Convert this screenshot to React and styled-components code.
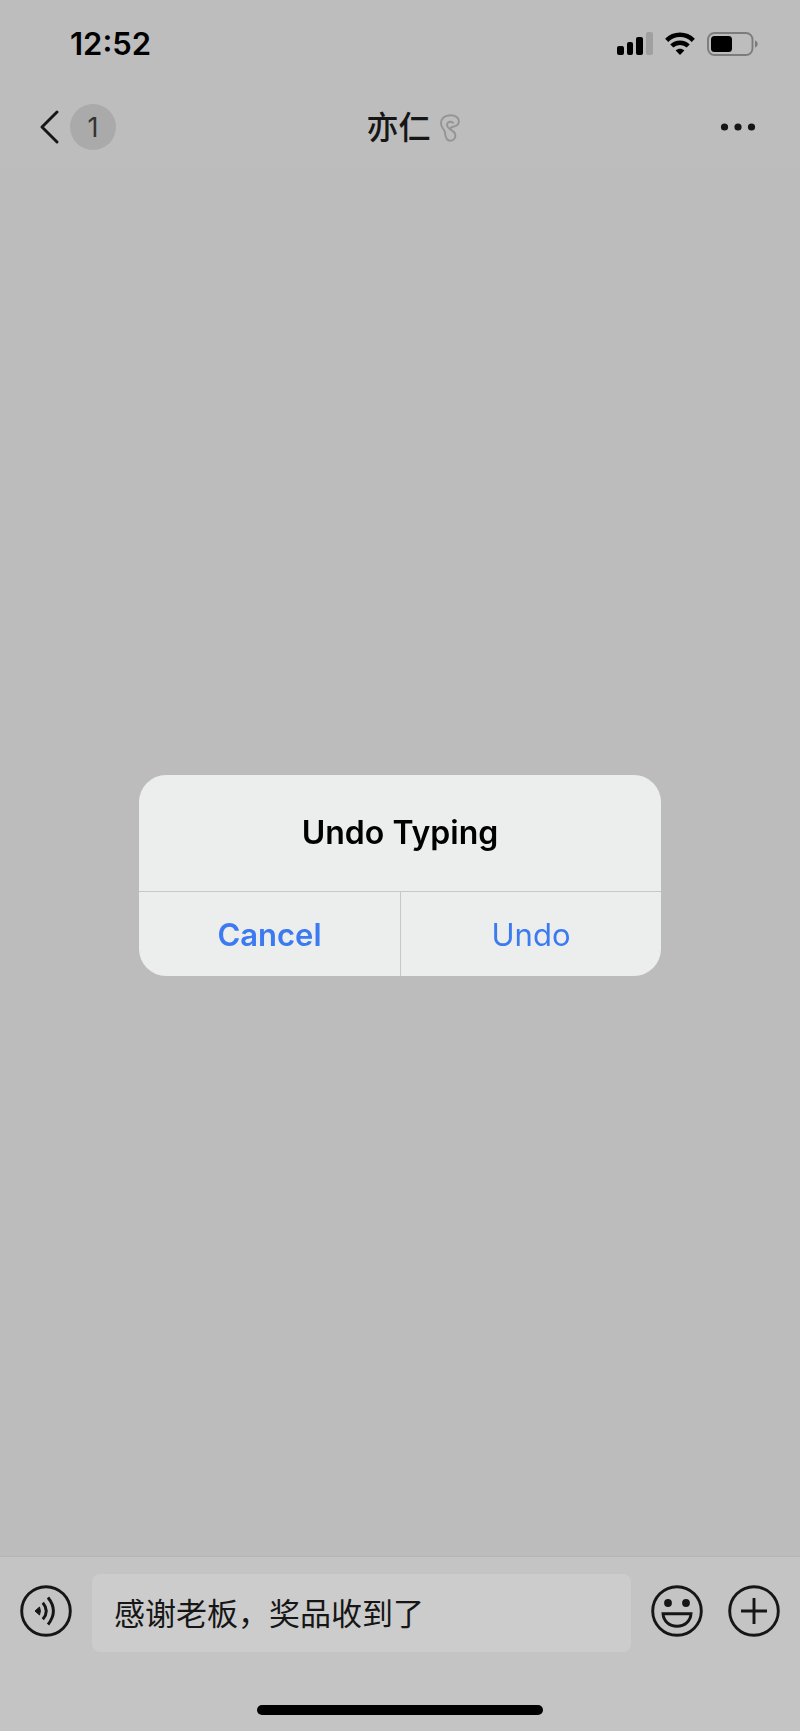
import React, { useState } from 'react';
import styled, { createGlobalStyle } from 'styled-components';

const GlobalStyles = createGlobalStyle`
  * {
    box-sizing: border-box;
  }

  body {
    margin: 0;
    background-color: #bcbcbc;
    font-family: Inter, "Noto Sans CJK SC", sans-serif;
    color: #161616;
  }

  button {
    padding: 0;
    border: none;
    background: none;
    font: inherit;
    color: inherit;
    cursor: pointer;
  }

  svg {
    display: block;
  }
`;

const Screen = styled.div`
  display: flex;
  flex-direction: column;
  min-height: 100vh;
`;

const Top = styled.header`
  background-color: #bdbdbd;
`;

const StatusBar = styled.div`
  display: flex;
  align-items: center;
  justify-content: space-between;
  height: 88px;
  padding: 0 41px 0 70px;
  color: #000;
`;

const Time = styled.time`
  font-size: 31px;
  font-weight: 600;
  line-height: 36px;
`;

const StatusIcons = styled.div`
  display: flex;
  align-items: center;
  gap: 12px;
`;

const NavBar = styled.nav`
  display: grid;
  grid-template-columns: 1fr auto 1fr;
  align-items: center;
  height: 80px;
  padding: 0 44px 2px 40px;
`;

const BackButton = styled.button`
  display: flex;
  align-items: center;
  justify-self: start;
  gap: 11px;
`;

const UnreadBadge = styled.span`
  width: 46px;
  height: 46px;
  border-radius: 50%;
  background-color: #aaaaaa;
  color: #333;
  font-size: 27px;
  line-height: 48px;
  text-align: center;
`;

const Title = styled.h1`
  display: flex;
  align-items: center;
  gap: 9px;
  margin: 0;
  padding: 2px 0 0 30px;
  font-size: 32px;
  font-weight: 500;
  line-height: 40px;
`;

const MoreButton = styled.button`
  justify-self: end;
`;

const Messages = styled.main`
  flex: 1;
`;

const Footer = styled.footer`
  border-top: 1px solid #b6b6b6;
  background-color: #c4c4c4;
`;

const InputBar = styled.form`
  display: flex;
  align-items: center;
  gap: 20px;
  padding: 17px 20px 0;
`;

const IconButton = styled.button`
  && {
    padding-bottom: 4px;
  }
`;

const MessageInput = styled.input`
  flex: 1;
  min-width: 0;
  height: 78px;
  padding: 0 22px 4px;
  border: none;
  border-radius: 8px;
  outline: none;
  background-color: #cccccc;
  color: #161616;
  font-family: "Noto Sans CJK SC", sans-serif;
  font-size: 31px;
`;

const Actions = styled.div`
  display: flex;
  gap: 25px;
`;

const HomeIndicator = styled.div`
  width: 286px;
  height: 10px;
  margin: 53px auto 16px;
  border-radius: 5px;
  background-color: #000;
`;

// Camada do alerta, por cima da conversa
const Overlay = styled.div`
  position: fixed;
  inset: 0;
  display: flex;
  align-items: center;
  justify-content: center;
  padding-top: 20px;
`;

const Alert = styled.div`
  width: 522px;
  max-width: 90%;
  overflow: hidden;
  border-radius: 27px;
  background-color: #eceeed;
`;

const AlertTitle = styled.h2`
  margin: 0;
  padding: 38px 20px;
  color: #000;
  font-size: 32px;
  font-weight: 600;
  line-height: 40px;
  text-align: center;
`;

const AlertActions = styled.div`
  display: grid;
  grid-template-columns: 1fr 1fr;
  border-top: 1px solid #c6c8c7;
`;

const AlertButton = styled.button`
  && {
    height: 84px;
    color: #3b7af0;
    font-size: 31px;
    font-weight: ${({ $bold }) => ($bold ? 600 : 400)};
  }

  && + && {
    border-left: 1px solid #c6c8c7;
  }
`;

const SignalIcon = () => (
  <svg width="36" height="24" viewBox="0 0 36 24" aria-hidden="true">
    <rect x="0" y="14" width="7" height="9" rx="2" />
    <rect x="10" y="10" width="6" height="13" rx="2" />
    <rect x="19" y="5" width="7" height="18" rx="2" />
    <rect x="29" y="0" width="7" height="23" rx="2" fill="#a0a0a0" />
  </svg>
);

const WifiIcon = () => (
  <svg width="30" height="24" viewBox="0 0 30 24" aria-hidden="true">
    <g fill="none" stroke="#000" strokeWidth="4.4">
      <path d="M1.7 8.4C9 .9 21 .9 28.3 8.4" />
      <path d="M6.8 14C11.2 9.6 18.8 9.6 23.2 14" />
    </g>
    <path d="M15 23L10.7 18.5C12.9 16.2 17.1 16.2 19.3 18.5Z" />
  </svg>
);

const BatteryIcon = () => (
  <svg width="52" height="24" viewBox="0 0 52 24" aria-hidden="true">
    <rect x="1" y="1" width="44.5" height="22" rx="6.5" fill="none" stroke="#7c7c7c" strokeWidth="1.9" />
    <rect x="4" y="4" width="21" height="16" rx="3.5" />
    <path d="M48 8.5C51.6 9.5 51.6 14.5 48 15.5Z" fill="#7c7c7c" />
  </svg>
);

const BackIcon = () => (
  <svg width="19" height="34" viewBox="0 0 19 34" fill="none" stroke="#161616" strokeWidth="2.9" strokeLinecap="round" strokeLinejoin="round" aria-hidden="true">
    <path d="M17 2L2 17L17 32" />
  </svg>
);

const EarIcon = () => (
  <svg width="20" height="28" viewBox="0 0 20 28" fill="none" stroke="#949494" strokeWidth="1.9" strokeLinecap="round" strokeLinejoin="round" aria-hidden="true">
    <path d="M13 8.8C10.500 6.8 7 8 7 10.800C7 13 8.500 14 10 15.200C10.500 13.400 12 12.900 14.200 12.400C17.300 11.600 19 9.500 18.800 6.900C18.400 3 14.600 1.200 10.200 1.200C4.600 1.200 1 4.700 1 9.400C1 12.800 3.700 14.600 4.700 17.400C5.600 20.200 4.600 26.600 10.200 26.800C14 26.800 15.900 23.600 15.200 20.200C14.600 17.600 12 16.800 10 15.200" />
  </svg>
);

const MoreIcon = () => (
  <svg width="36" height="8" viewBox="0 0 36 8" fill="#161616" aria-hidden="true">
    <circle cx="4.5" cy="4" r="3.6" />
    <circle cx="18" cy="4" r="3.6" />
    <circle cx="31.5" cy="4" r="3.6" />
  </svg>
);

const RoundIcon = ({ children }) => (
  <svg width="52" height="52" viewBox="0 0 52 52" fill="none" stroke="#161616" strokeWidth="2.9" aria-hidden="true">
    <circle cx="26" cy="26" r="24.3" />
    {children}
  </svg>
);

const VoiceIcon = () => (
  <RoundIcon>
    <path d="M15 26L19.5 22Q21.300 26 19.5 30Z" fill="#161616" stroke="#161616" strokeWidth="1" />
    <path d="M22.800 17.700Q29.800 26 22.800 34.300" />
    <path d="M28 12.500Q38.800 26 28 39.500" />
  </RoundIcon>
);

const SmileIcon = () => (
  <RoundIcon>
    <circle cx="17" cy="18" r="3.9" fill="#161616" stroke="none" />
    <circle cx="35" cy="18" r="3.9" fill="#161616" stroke="none" />
    <path d="M12 28.7H40C39.5 36.5 33.5 41.3 26 41.3S12.5 36.5 12 28.7Z" />
  </RoundIcon>
);

const PlusIcon = () => (
  <RoundIcon>
    <path d="M26 13V39M13 26H39" />
  </RoundIcon>
);

function App() {
  const [message, setMessage] = useState('感谢老板，奖品收到了');
  const [showAlert, setShowAlert] = useState(true);

  const handleUndo = () => {
    setMessage('');
    setShowAlert(false);
  };

  return (
    <Screen>
      <GlobalStyles />
      <Top>
        <StatusBar>
          <Time>12:52</Time>
          <StatusIcons>
            <SignalIcon />
            <WifiIcon />
            <BatteryIcon />
          </StatusIcons>
        </StatusBar>
        <NavBar>
          <BackButton type="button">
            <BackIcon />
            <UnreadBadge>1</UnreadBadge>
          </BackButton>
          <Title>
            亦仁
            <EarIcon />
          </Title>
          <MoreButton type="button" aria-label="More">
            <MoreIcon />
          </MoreButton>
        </NavBar>
      </Top>

      <Messages />

      <Footer>
        <InputBar onSubmit={(e) => e.preventDefault()}>
          <IconButton type="button" aria-label="Voice">
            <VoiceIcon />
          </IconButton>
          <MessageInput
            type="text"
            aria-label="Message"
            value={message}
            onChange={(e) => setMessage(e.target.value)}
          />
          <Actions>
            <IconButton type="button" aria-label="Emoji">
              <SmileIcon />
            </IconButton>
            <IconButton type="button" aria-label="Add">
              <PlusIcon />
            </IconButton>
          </Actions>
        </InputBar>
        <HomeIndicator />
      </Footer>

      {showAlert && (
        <Overlay>
          <Alert role="alertdialog" aria-labelledby="alert-title">
            <AlertTitle id="alert-title">Undo Typing</AlertTitle>
            <AlertActions>
              <AlertButton type="button" $bold onClick={() => setShowAlert(false)}>
                Cancel
              </AlertButton>
              <AlertButton type="button" onClick={handleUndo}>
                Undo
              </AlertButton>
            </AlertActions>
          </Alert>
        </Overlay>
      )}
    </Screen>
  );
}

export default App;
